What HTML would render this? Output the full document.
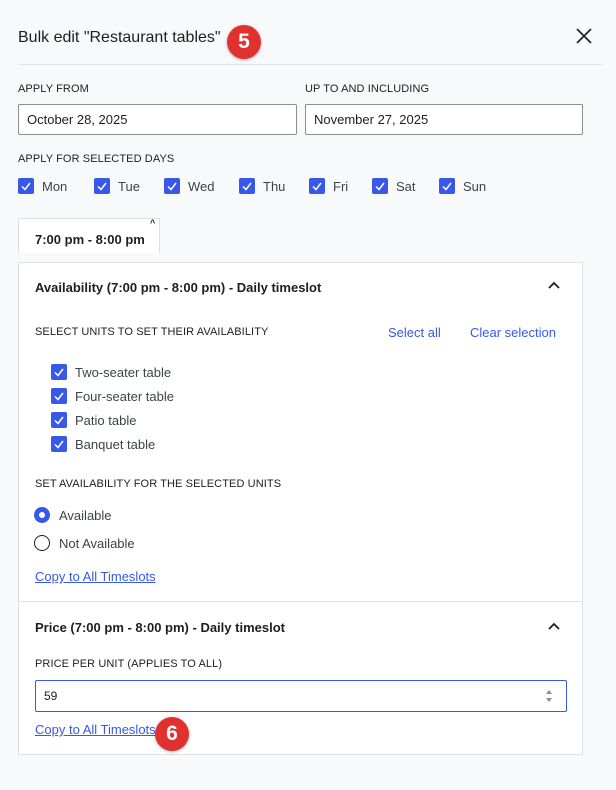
<!DOCTYPE html><html><head><style>
*{box-sizing:border-box;margin:0;padding:0}
body{width:616px;height:790px;background:#f8f9fb;font-family:"Liberation Sans",sans-serif;color:#1e1e1e;position:relative;overflow:hidden}
.a{position:absolute;white-space:nowrap}
.lbl{font-size:11px;color:#1e1e1e;letter-spacing:.1px}
.inp{position:absolute;background:#fff;border:1px solid #8c8f94;border-radius:2px;font-size:13px;padding-left:8px;display:flex;align-items:center}
.cb{position:absolute;width:16px;height:16px;background:#3858e9;border-radius:2px}
.cb svg{position:absolute;left:2px;top:2px}
.t13{font-size:13px;color:#3c434a}
.badge{position:absolute;width:34px;height:34px;border-radius:50%;background:#e0312f;color:#fff;font-weight:bold;font-size:21px;display:flex;align-items:center;justify-content:center;box-shadow:0 1px 3px rgba(0,0,0,.3)}
a{color:#3858e9;text-decoration:underline;font-size:13px}
</style></head><body>
<div class="a" style="left:18px;top:29px;font-size:16px;color:#1e1e1e">Bulk edit "Restaurant tables"</div>
<div class="badge" style="left:227px;top:25px">5</div>
<svg class="a" style="left:575px;top:27px" width="18" height="18"><path d="M2 2L16 16M16 2L2 16" stroke="#1e1e1e" stroke-width="1.6"/></svg>
<div class="a" style="left:18px;top:64px;width:584px;height:1px;background:#e2e4e7"></div>
<div class="a lbl" style="left:18px;top:83px">APPLY FROM</div>
<div class="a lbl" style="left:305px;top:83px">UP TO AND INCLUDING</div>
<div class="inp" style="left:18px;top:104px;width:279px;height:31px">October 28, 2025</div>
<div class="inp" style="left:305px;top:104px;width:278px;height:31px">November 27, 2025</div>
<div class="a lbl" style="left:18px;top:153px">APPLY FOR SELECTED DAYS</div>
<div id="days"></div>
<div class="a" style="left:18px;top:218px;width:142px;height:35px;background:#fff;border:1px solid #e0e0e0;border-bottom:none;font-size:13px;font-weight:bold;padding:13px 0 0 16px">7:00 pm - 8:00 pm</div>
<div class="a" style="left:150px;top:218px;font-size:9px;font-weight:bold">^</div>
<div class="a" style="left:18px;top:262px;width:565px;height:493px;background:#fff;border:1px solid #e0e0e0"></div>
<div class="a" style="left:35px;top:280px;font-size:13px;font-weight:bold;font-weight:600">Availability (7:00 pm - 8:00 pm) - Daily timeslot</div>
<svg class="a" style="left:547px;top:280px" width="14" height="10"><path d="M2 8L7 3L12 8" stroke="#1e1e1e" stroke-width="1.8" fill="none"/></svg>
<div class="a lbl" style="left:35px;top:326px">SELECT UNITS TO SET THEIR AVAILABILITY</div>
<a class="a" style="left:388px;top:325px;text-decoration:none">Select all</a>
<a class="a" style="left:470px;top:325px;text-decoration:none">Clear selection</a>
<div id="units"></div>
<div class="a lbl" style="left:35px;top:478px">SET AVAILABILITY FOR THE SELECTED UNITS</div>
<div class="a" style="left:34px;top:507px;width:16px;height:16px;border-radius:50%;background:#3858e9"><div style="position:absolute;left:5px;top:5px;width:6px;height:6px;border-radius:50%;background:#fff"></div></div>
<div class="a t13" style="left:59px;top:508px">Available</div>
<div class="a" style="left:34px;top:535px;width:16px;height:16px;border-radius:50%;border:1px solid #1e1e1e"></div>
<div class="a t13" style="left:59px;top:536px">Not Available</div>
<a class="a" style="left:35px;top:569px">Copy to All Timeslots</a>
<div class="a" style="left:18px;top:601px;width:565px;height:1px;background:#e0e0e0"></div>
<div class="a" style="left:35px;top:620px;font-size:13px;font-weight:600">Price (7:00 pm - 8:00 pm) - Daily timeslot</div>
<svg class="a" style="left:547px;top:621px" width="14" height="10"><path d="M2 8L7 3L12 8" stroke="#1e1e1e" stroke-width="1.8" fill="none"/></svg>
<div class="a lbl" style="left:35px;top:658px">PRICE PER UNIT (APPLIES TO ALL)</div>
<div class="inp" style="left:35px;top:680px;width:532px;height:32px;border:1.5px solid #3858e9;font-size:12px">59</div>
<svg class="a" style="left:544px;top:688px" width="10" height="16"><path d="M2 6L5 2L8 6Z M2 10L5 14L8 10Z" fill="#8c8f94"/></svg>
<a class="a" style="left:35px;top:722px">Copy to All Timeslots</a>
<div class="badge" style="left:155px;top:717px">6</div>
<script>
const ck='<svg width="12" height="12"><path d="M2 6.5L5 9.5L10 3" stroke="#fff" stroke-width="1.5" fill="none"/></svg>';
let h='';[["Mon",18],["Tue",94],["Wed",164],["Thu",239],["Fri",309],["Sat",372],["Sun",439]].forEach(([d,x])=>{h+=`<div class="cb" style="left:${x}px;top:178px">${ck}</div><div class="a t13" style="left:${x+24}px;top:179px">${d}</div>`});
document.getElementById('days').outerHTML=h;
h='';["Two-seater table","Four-seater table","Patio table","Banquet table"].forEach((u,i)=>{let y=364+i*24;h+=`<div class="cb" style="left:51px;top:${y}px">${ck}</div><div class="a t13" style="left:75px;top:${y+1}px">${u}</div>`});
document.getElementById('units').outerHTML=h;
</script>
</body></html>
